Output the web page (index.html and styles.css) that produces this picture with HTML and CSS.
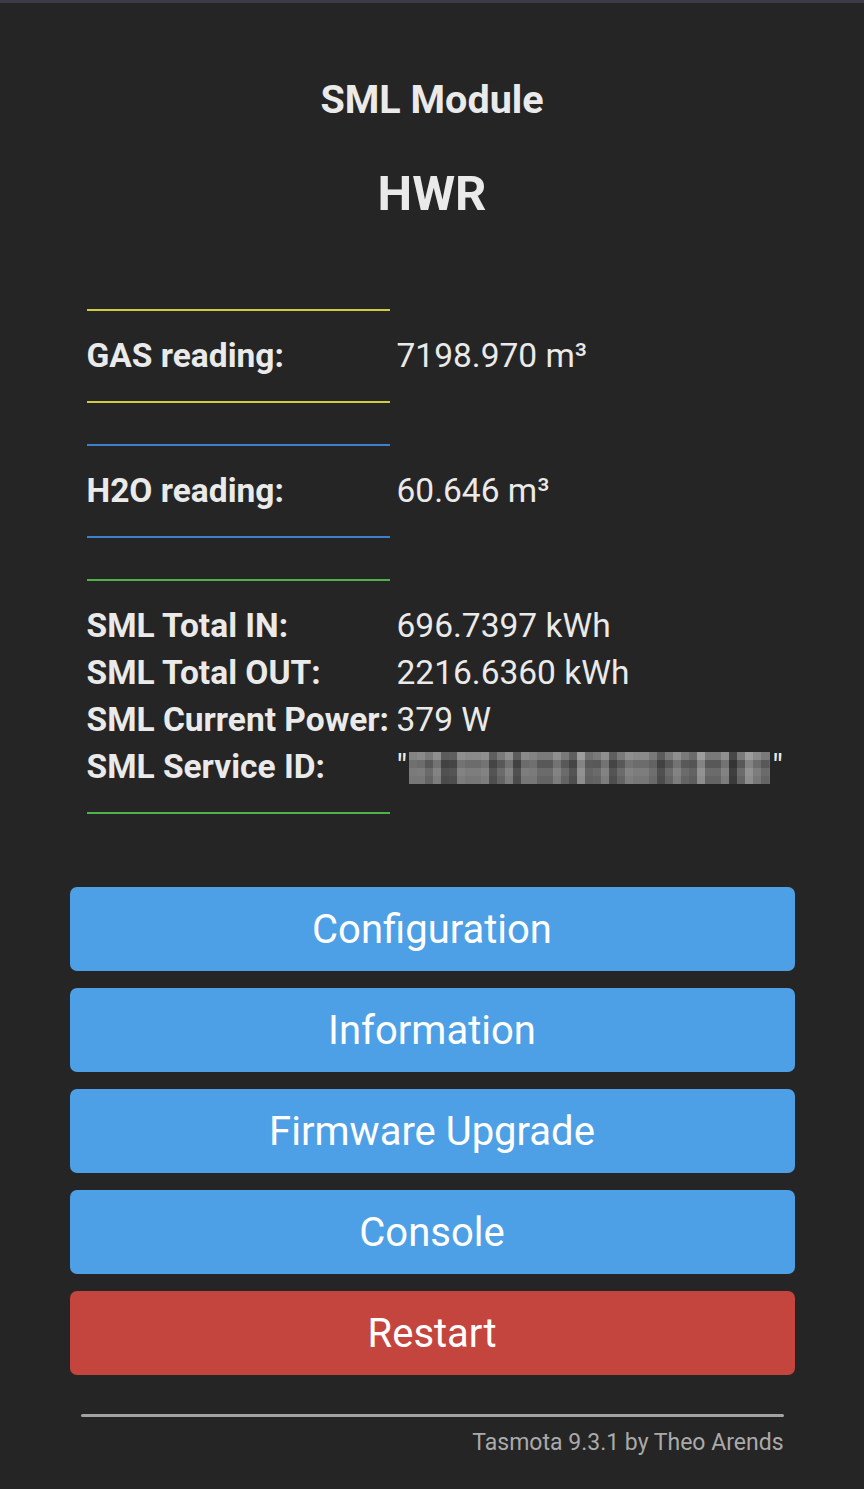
FILE: index.html
```html
<!DOCTYPE html>
<html lang="en">
<head>
  <meta charset="UTF-8" />
  <meta name="viewport" content="width=device-width, initial-scale=1.0"/>
  <title>HWR - Main Menu</title>
  <link rel="stylesheet" href="styles.css">
</head>
<body>
  <div class="topbar"></div>
  <div class="main">
    <div class="header">
      <h3>SML Module</h3>
      <h2>HWR</h2>
    </div>

    <div class="sensors">
      <div class="group gas">
        <hr class="line">
        <div class="row"><span class="label">GAS reading:</span><span class="value">7198.970 m³</span></div>
        <hr class="line">
      </div>

      <div class="group water">
        <hr class="line">
        <div class="row"><span class="label">H2O reading:</span><span class="value">60.646 m³</span></div>
        <hr class="line">
      </div>

      <div class="group power">
        <hr class="line">
        <div class="row"><span class="label">SML Total IN:</span><span class="value">696.7397 kWh</span></div>
        <div class="row"><span class="label">SML Total OUT:</span><span class="value">2216.6360 kWh</span></div>
        <div class="row"><span class="label">SML Current Power:</span><span class="value">379 W</span></div>
        <div class="row"><span class="label">SML Service ID:</span><span class="value">"<span class="hidden-id"></span>"</span></div>
        <hr class="line">
      </div>
    </div>

    <div class="buttons">
      <button class="btn">Configuration</button>
      <button class="btn">Information</button>
      <button class="btn">Firmware Upgrade</button>
      <button class="btn">Console</button>
      <button class="btn btn-red">Restart</button>
    </div>

    <hr class="footer-line">
    <div class="footer">Tasmota 9.3.1 by Theo Arends</div>
  </div>
</body>
</html>
```

FILE: styles.css
```css
body {
  font-family: Roboto, "Noto Sans", sans-serif;
  margin: 0;
  padding: 0;
  background-color: #252525;
  color: #eaeaea;
}

.topbar {
  height: 3px;
  background-color: #3d3b47;
}

.main {
  width: 725px;
  margin: 0 auto;
}

.header {
  text-align: center;
  padding-top: 73px;
}

.header h3 {
  font-size: 39.5px;
  line-height: 48px;
  font-weight: 700;
  margin: 0;
}

.header h2 {
  font-size: 49px;
  line-height: 60px;
  font-weight: 700;
  margin: 40px 0 0;
}

.sensors {
  padding-left: 17px;
  margin-top: 85px;
}

.group + .group {
  margin-top: 41px;
}

.line {
  width: 303px;
  height: 2px;
  margin: 0;
  border: none;
}

.row:first-of-type {
  margin-top: 21px;
}

.row:last-of-type {
  margin-bottom: 22px;
}

.gas .line { background-color: #cdcd3e; }
.water .line { background-color: #3d7fcc; }
.power .line { background-color: #4db34a; }

.row {
  display: flex;
  font-size: 33.5px;
  line-height: 47px;
  white-space: nowrap;
}

.label {
  width: 310px;
  font-weight: 700;
}

.value {
  display: flex;
  align-items: center;
}

.hidden-id {
  display: inline-block;
  width: 361px;
  height: 32px;
  margin: 2px 2px 0;
  background:
    repeating-linear-gradient(90deg, rgba(255,255,255,.16) 0 8px, transparent 8px 24px),
    repeating-linear-gradient(90deg, rgba(0,0,0,.22) 0 8px, transparent 8px 40px),
    repeating-linear-gradient(90deg, rgba(255,255,255,.12) 0 16px, transparent 16px 56px),
    repeating-linear-gradient(90deg, transparent 0 32px, rgba(0,0,0,.25) 32px 40px, transparent 40px 72px),
    repeating-linear-gradient(0deg, rgba(0,0,0,.18) 0 8px, transparent 8px 16px),
    repeating-linear-gradient(0deg, rgba(255,255,255,.1) 0 8px, transparent 8px 24px),
    #6b6b6b;
}

.buttons {
  margin-top: 73px;
  display: flex;
  flex-direction: column;
  gap: 17px;
}

.btn {
  height: 84px;
  border: none;
  border-radius: 7px;
  background-color: #4ea0e6;
  color: #fff;
  font-family: Roboto, "Noto Sans", sans-serif;
  font-size: 40px;
  cursor: pointer;
}

.btn-red {
  background-color: #c4443e;
}

.footer-line {
  height: 3px;
  margin: 39px 11px 0;
  border: none;
  border-radius: 2px;
  background-color: #a3a3a3;
}

.footer {
  text-align: right;
  padding-right: 11px;
  margin-top: 13px;
  font-size: 23px;
  line-height: 26px;
  color: #aaa;
}
```
